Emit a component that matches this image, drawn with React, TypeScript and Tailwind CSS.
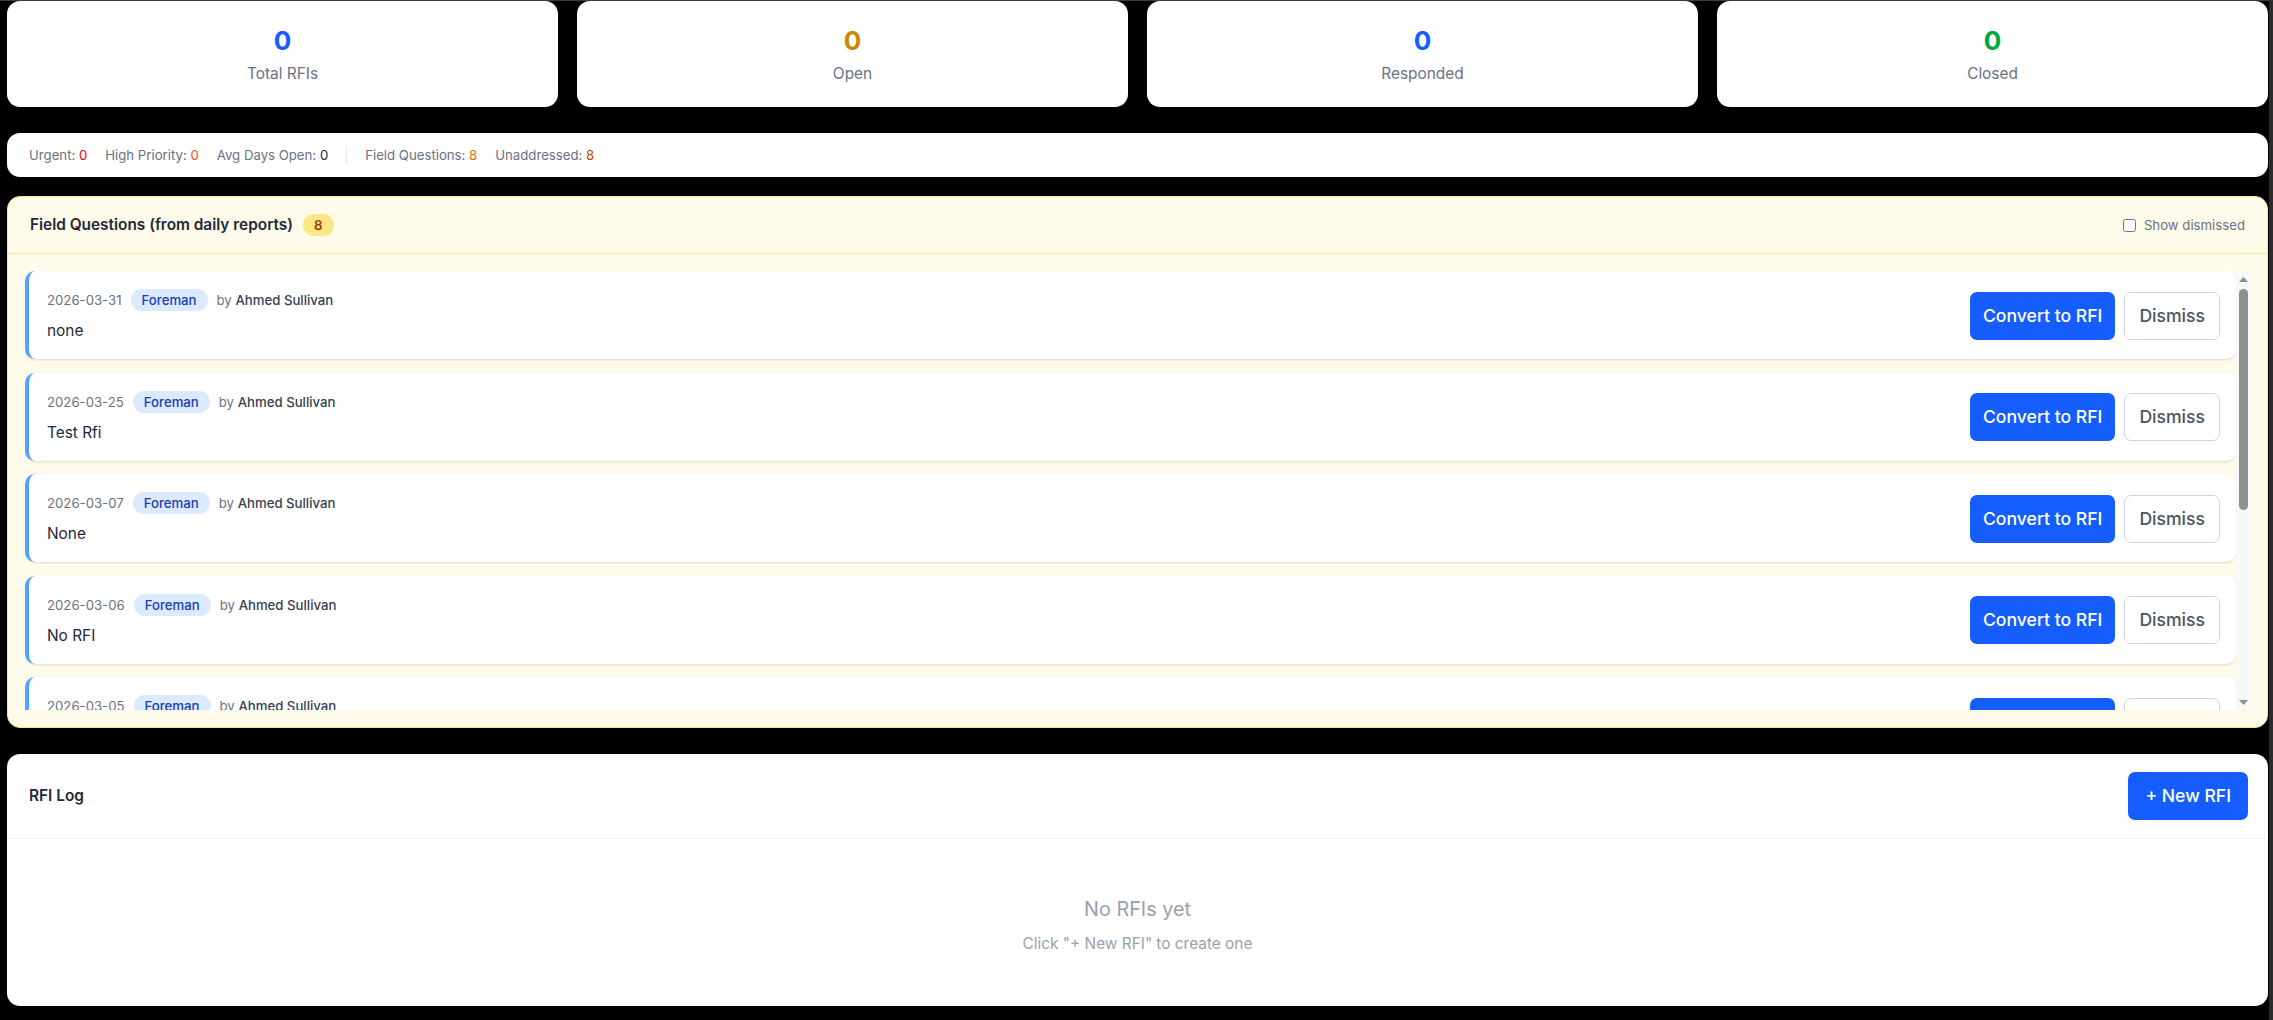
const stats = [
  { value: 0, label: "Total RFIs", color: "text-blue-600" },
  { value: 0, label: "Open", color: "text-yellow-600" },
  { value: 0, label: "Responded", color: "text-blue-600" },
  { value: 0, label: "Closed", color: "text-green-600" },
];

const questions = [
  { date: "2026-03-31", text: "none" },
  { date: "2026-03-25", text: "Test Rfi" },
  { date: "2026-03-07", text: "None" },
  { date: "2026-03-06", text: "No RFI" },
  { date: "2026-03-05", text: "none" },
  { date: "2026-03-04", text: "None" },
  { date: "2026-03-03", text: "none" },
  { date: "2026-03-02", text: "No RFI" },
];

const StatCard = ({ value, label, color }: { value: number; label: string; color: string }) => (
  <div className="bg-white rounded-[13px] pt-[22px] pb-[22px] text-center">
    <div className={`text-[26px] leading-[36px] font-bold ${color}`}>{value}</div>
    <div className="mt-[4px] text-[15.4px] leading-[22px] text-gray-500">{label}</div>
  </div>
);

const QuestionCard = ({ date, text }: { date: string; text: string }) => (
  <div className="flex items-center justify-between bg-white rounded-[10px] border-l-4 border-blue-400 shadow-sm pl-[18px] pr-[16px] pt-[18px] pb-[17px]">
    <div>
      <div className="flex items-center gap-[9px] text-[13.2px] leading-[22px]">
        <span className="text-gray-500">{date}</span>
        <span className="rounded-full bg-blue-100 px-[11px] font-medium text-blue-800">Foreman</span>
        <span className="text-gray-500">
          by <span className="font-medium text-gray-700">Ahmed Sullivan</span>
        </span>
      </div>
      <p className="mt-[9px] text-[15.4px] leading-[22px] text-gray-800">{text}</p>
    </div>
    <div className="flex items-center gap-[9px]">
      <button className="rounded-[7px] bg-blue-600 px-[13px] py-[11px] text-[17.6px] leading-[26px] font-medium text-white">
        Convert to RFI
      </button>
      <button className="rounded-[7px] border border-gray-300 bg-white px-[14px] py-[10px] text-[17.6px] leading-[26px] font-medium text-gray-600">
        Dismiss
      </button>
    </div>
  </div>
);

// classic scrollbar look (headless screenshots hide the native one)
const ScrollTrack = () => (
  <div aria-hidden className="flex w-[15px] shrink-0 flex-col items-center bg-[#f8f8f8]">
    <div className="flex h-[16px] items-center justify-center">
      <svg width="9" height="5" viewBox="0 0 9 5">
        <path d="M4.5 0 9 5H0z" fill="#8f8f8f" />
      </svg>
    </div>
    <div className="mt-[2px] h-[221px] w-[9px] rounded-full bg-[#8f8f8f]" />
    <div className="flex-1" />
    <div className="flex h-[16px] items-center justify-center">
      <svg width="9" height="5" viewBox="0 0 9 5">
        <path d="M0 0h9L4.5 5z" fill="#8f8f8f" />
      </svg>
    </div>
  </div>
);

export default function App() {
  return (
    <div className="min-h-screen bg-black border-t border-t-[#3c3c3c] border-r-4 border-r-[#2b2b2b] pl-[7px] pr-px font-['Inter','Noto_Sans',sans-serif]">
      {/* Summary counts */}
      <div className="grid grid-cols-4 gap-[19px]">
        {stats.map((s) => (
          <StatCard key={s.label} {...s} />
        ))}
      </div>

      {/* Secondary metrics */}
      <div className="mt-[26px] flex items-center gap-[18px] rounded-[13px] bg-white px-[22px] py-[13px] text-[13.2px] leading-[18px] text-gray-500">
        <span>
          Urgent: <span className="text-red-600">0</span>
        </span>
        <span>
          High Priority: <span className="text-orange-600">0</span>
        </span>
        <span>
          Avg Days Open: <span className="text-gray-800">0</span>
        </span>
        <span className="h-[18px] w-px bg-gray-200" />
        <span>
          Field Questions: <span className="text-amber-600">8</span>
        </span>
        <span>
          Unaddressed: <span className="text-amber-700">8</span>
        </span>
      </div>

      {/* Field questions */}
      <section className="mt-[19px] rounded-[13px] border border-amber-200 bg-amber-50">
        <div className="flex items-center justify-between border-b border-amber-200 px-[22px] py-[17px]">
          <div className="flex items-center gap-[10px]">
            <h3 className="text-[15.4px] leading-[22px] font-semibold text-gray-800">Field Questions (from daily reports)</h3>
            <span className="rounded-full bg-amber-200 px-[11px] text-[13.2px] leading-[22px] font-semibold text-amber-800">8</span>
          </div>
          <label className="flex items-center gap-[8px] text-[13.2px] leading-[18px] text-gray-500">
            <input type="checkbox" className="m-0 size-[13px]" />
            Show dismissed
          </label>
        </div>
        <div className="pl-[17px] pr-[16px] py-[17px]">
          <div className="flex h-[439px]">
            <div className="flex-1 overflow-y-auto space-y-[13.5px]">
              {questions.map((q) => (
                <QuestionCard key={q.date} {...q} />
              ))}
            </div>
            <ScrollTrack />
          </div>
        </div>
      </section>

      {/* RFI log */}
      <section className="mt-[26px] rounded-[13px] bg-white">
        <div className="flex items-center justify-between border-b border-gray-100 pl-[22px] pr-[20px] py-[18px]">
          <h3 className="text-[15.4px] leading-[22px] font-semibold text-gray-800">RFI Log</h3>
          <button className="rounded-[7px] bg-blue-600 px-[17px] py-[11px] text-[17.6px] leading-[26px] font-medium text-white">
            + New RFI
          </button>
        </div>
        <div className="pt-[55px] pb-[51px] text-center">
          <p className="text-[19.8px] leading-[31px] text-gray-400">No RFIs yet</p>
          <p className="mt-[8px] text-[15.4px] leading-[22px] text-gray-400">Click "+ New RFI" to create one</p>
        </div>
      </section>
    </div>
  );
}
